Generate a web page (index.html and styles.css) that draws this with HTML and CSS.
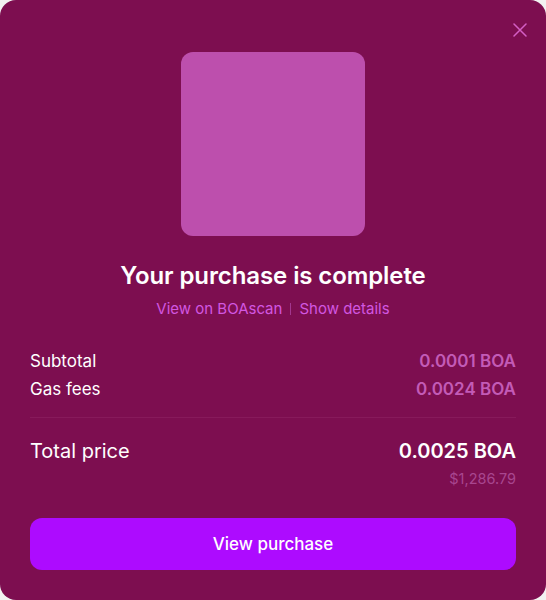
FILE: index.html
```html
<!DOCTYPE html>
<html lang="en">
<head>
<meta charset="utf-8">
<link rel="stylesheet" href="styles.css">
</head>
<body>
<div class="modal">
  <button class="close" aria-label="Close">
    <svg width="14" height="14" viewBox="0 0 14 14"><path d="M1 1 L13 13 M13 1 L1 13" stroke="currentColor" stroke-width="1.5" stroke-linecap="round" fill="none"/></svg>
  </button>
  <div class="thumb"></div>
  <h1 class="title">Your purchase is complete</h1>
  <div class="links">
    <a class="link">View on BOAscan</a>
    <span class="sep"></span>
    <a class="link">Show details</a>
  </div>
  <div class="rows">
    <div class="row"><span>Subtotal</span><span class="val">0.0001 BOA</span></div>
    <div class="row"><span>Gas fees</span><span class="val">0.0024 BOA</span></div>
  </div>
  <div class="divider"></div>
  <div class="total">
    <span>Total price</span><span class="total-val">0.0025 BOA</span>
  </div>
  <div class="usd">$1,286.79</div>
  <button class="cta">View purchase</button>
</div>
</body>
</html>
```
FILE: styles.css
```css
html, body {
  margin: 0;
  padding: 0;
  background: #f2f2f2;
}
body {
  font-family: Inter, "Noto Sans", sans-serif;
}
.modal {
  position: relative;
  width: 546px;
  height: 600px;
  box-sizing: border-box;
  background: #7d0e50;
  border-radius: 16px;
  padding: 52px 30px 30px;
  display: flex;
  flex-direction: column;
  color: #ffffff;
}
.close {
  position: absolute;
  top: 23px;
  right: 19px;
  width: 14px;
  height: 14px;
  padding: 0;
  border: 0;
  background: none;
  color: #d45ec4;
  display: flex;
}
.thumb {
  width: 184px;
  height: 184px;
  border-radius: 12px;
  background: #bd4fad;
  align-self: center;
}
.title {
  margin: 25px 0 0;
  font-size: 24px;
  line-height: 30px;
  font-weight: 600;
  text-align: center;
  letter-spacing: -0.1px;
}
.links {
  margin-top: 8px;
  display: flex;
  justify-content: center;
  align-items: center;
  gap: 8px;
  font-size: 15px;
  line-height: 20px;
}
.link {
  color: #d257e0;
}
.sep {
  width: 1px;
  height: 12px;
  background: #a2378f;
}
.rows {
  margin-top: 28px;
}
.row, .total {
  display: flex;
  justify-content: space-between;
  align-items: center;
  font-size: 17px;
  line-height: 28px;
}
.val {
  font-weight: 600;
  color: #c35bb7;
}
.divider {
  margin-top: 14px;
  height: 1px;
  background: #871a5b;
}
.total {
  margin-top: 19px;
  font-size: 20px;
  font-weight: 400;
}
.total-val {
  font-weight: 600;
}
.usd {
  margin-top: 4px;
  text-align: right;
  font-size: 14.5px;
  line-height: 20px;
  color: #a8468f;
}
.cta {
  margin-top: 29px;
  height: 52px;
  border: 0;
  border-radius: 12px;
  background: #ad0bff;
  color: #ffffff;
  font-family: Inter, "Noto Sans", sans-serif;
  font-size: 17px;
  font-weight: 500;
}
```
